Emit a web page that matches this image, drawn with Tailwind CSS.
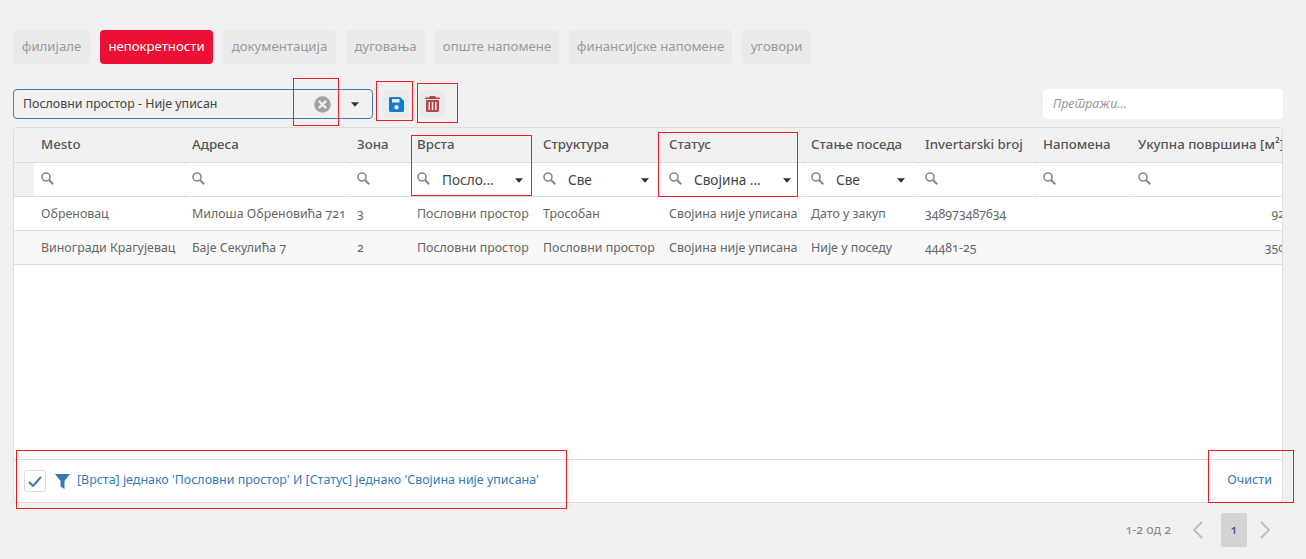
<!doctype html>
<html lang="sr">
<head>
<meta charset="utf-8">
<script src="https://cdn.jsdelivr.net/npm/@tailwindcss/browser@4"></script>
</head>
<body class="bg-[#f1f1f1] font-['Noto_Sans',sans-serif] text-[#555]">
<div class="relative h-[559px] w-[1306px] overflow-hidden px-[13px] pt-[30px]">

  <!-- tabs -->
  <div class="flex gap-[10px] text-[13.2px] text-[#999]">
    <div class="flex h-[34px] w-[77px] items-center justify-center rounded-[4px] bg-[#e9eaec]">филијале</div>
    <div class="flex h-[34px] w-[113px] items-center justify-center rounded-[4px] bg-[#eb1034] text-white">непокретности</div>
    <div class="flex h-[34px] w-[113px] items-center justify-center rounded-[4px] bg-[#e9eaec]">документација</div>
    <div class="flex h-[34px] w-[79px] items-center justify-center rounded-[4px] bg-[#e9eaec]">дуговања</div>
    <div class="flex h-[34px] w-[124px] items-center justify-center rounded-[4px] bg-[#e9eaec]">опште напомене</div>
    <div class="flex h-[34px] w-[163px] items-center justify-center rounded-[4px] bg-[#e9eaec]">финансијске напомене</div>
    <div class="flex h-[34px] w-[69px] items-center justify-center rounded-[4px] bg-[#e9eaec]">уговори</div>
  </div>

  <!-- toolbar -->
  <div class="mt-[25px] flex h-[30px] w-[1270px] items-center">
    <div class="flex h-[30px] w-[360px] items-center rounded-[4px] border border-[#3f7db8] pl-[9px] text-[12.4px] text-[#444]">
      <span class="flex-1 pt-px">Пословни простор - Није уписан</span>
      <svg class="mr-[20px]" width="17" height="17" viewBox="0 0 17 17"><circle cx="8.500" cy="8.500" r="8.300" fill="#a3a3a3"/><path d="M5.500 5.500l6 6M11.500 5.500l-6 6" stroke="#f1f1f1" stroke-width="2.400" stroke-linecap="round"/></svg>
      <svg class="mr-[13px]" width="8" height="5" viewBox="0 0 9 5"><path d="M0 0h9L4.500 5z" fill="#333"/></svg>
    </div>
    <div class="ml-[10px] flex h-[28px] w-[26px] items-center justify-center rounded-[4px] bg-[#e9eaec]">
      <svg width="15" height="15" viewBox="0 0 15 15"><path fill-rule="evenodd" d="M1.500 0H11l4 4v9.500a1.500 1.500 0 0 1-1.500 1.500h-12A1.500 1.500 0 0 1 0 13.500v-12A1.500 1.500 0 0 1 1.500 0zM3 2v3.500h7.500V2zM7.500 8a2.200 2.200 0 1 0 0 4.400 2.200 2.200 0 0 0 0-4.400z" fill="#1679c9"/></svg>
    </div>
    <div class="ml-[10px] flex h-[28px] w-[26px] items-center justify-center rounded-[4px] bg-[#e9eaec]">
      <svg width="15" height="16" viewBox="0 0 15 16"><path fill-rule="evenodd" d="M5 0h5l1 1.500h4V3H0V1.500h4zM1 4h13v10.500a1.500 1.500 0 0 1-1.500 1.500h-10A1.500 1.500 0 0 1 1 14.500zm2.500 2v8H5V6zm3.200 0v8h1.600V6zm3.300 0v8h1.500V6z" fill="#b0474a"/></svg>
    </div>
    <div class="ml-auto flex h-[30px] w-[240px] items-center rounded-[4px] bg-white pl-[10px] text-[12.4px] italic text-[#999]">Претражи...</div>
  </div>

  <!-- grid -->
  <div class="mt-[8px] h-[376px] w-[1270px] overflow-hidden rounded-[4px] border border-[#dcdcdc] bg-white text-[13px]">
    <div class="grid h-[35px] grid-cols-[20px_151px_165px_60px_126px_126px_142px_114px_118px_95px_181px] items-center border-b border-[#dcdcdc] bg-[#f1f1f1] text-[13.3px] font-medium whitespace-nowrap text-[#555]">
      <div></div>
      <div class="pl-[7px]">Mesto</div>
      <div class="pl-[7px]">Адреса</div>
      <div class="pl-[7px]">Зона</div>
      <div class="pl-[7px]">Врста</div>
      <div class="pl-[7px]">Структура</div>
      <div class="pl-[7px]">Статус</div>
      <div class="pl-[7px]">Стање поседа</div>
      <div class="pl-[7px]">Invertarski broj</div>
      <div class="pl-[7px]">Напомена</div>
      <div class="pl-[7px]">Укупна површина [м²]</div>
    </div>
    <div class="grid h-[34px] grid-cols-[20px_151px_165px_60px_126px_126px_142px_114px_118px_95px_181px] items-stretch border-b border-[#dcdcdc] bg-[#f1f1f1] text-[13.6px] text-[#444]">
      <div></div>
      <div class="flex items-center rounded-[3px] bg-white pb-[2px] pl-[7px]"><svg width="13" height="13" viewBox="0 0 13 13"><circle cx="5" cy="5" r="4" fill="none" stroke="#888" stroke-width="1.600"/><path d="M8 8l4.200 4.200" stroke="#888" stroke-width="2"/></svg></div>
      <div class="flex items-center rounded-[3px] bg-white pb-[2px] pl-[7px]"><svg width="13" height="13" viewBox="0 0 13 13"><circle cx="5" cy="5" r="4" fill="none" stroke="#888" stroke-width="1.600"/><path d="M8 8l4.200 4.200" stroke="#888" stroke-width="2"/></svg></div>
      <div class="flex items-center rounded-[3px] bg-white pb-[2px] pl-[7px]"><svg width="13" height="13" viewBox="0 0 13 13"><circle cx="5" cy="5" r="4" fill="none" stroke="#888" stroke-width="1.600"/><path d="M8 8l4.200 4.200" stroke="#888" stroke-width="2"/></svg></div>
      <div class="flex items-center rounded-[3px] bg-white pt-[2px] pr-[13px] pl-[7px]"><svg class="mb-[5px]" width="13" height="13" viewBox="0 0 13 13"><circle cx="5" cy="5" r="4" fill="none" stroke="#888" stroke-width="1.600"/><path d="M8 8l4.200 4.200" stroke="#888" stroke-width="2"/></svg><span class="ml-[12px] flex-1">Посло...</span><svg width="8" height="5" viewBox="0 0 9 5"><path d="M0 0h9L4.500 5z" fill="#333"/></svg></div>
      <div class="flex items-center rounded-[3px] bg-white pt-[2px] pr-[13px] pl-[7px]"><svg class="mb-[5px]" width="13" height="13" viewBox="0 0 13 13"><circle cx="5" cy="5" r="4" fill="none" stroke="#888" stroke-width="1.600"/><path d="M8 8l4.200 4.200" stroke="#888" stroke-width="2"/></svg><span class="ml-[12px] flex-1">Све</span><svg width="8" height="5" viewBox="0 0 9 5"><path d="M0 0h9L4.500 5z" fill="#333"/></svg></div>
      <div class="flex items-center rounded-[3px] bg-white pt-[2px] pr-[13px] pl-[7px]"><svg class="mb-[5px]" width="13" height="13" viewBox="0 0 13 13"><circle cx="5" cy="5" r="4" fill="none" stroke="#888" stroke-width="1.600"/><path d="M8 8l4.200 4.200" stroke="#888" stroke-width="2"/></svg><span class="ml-[12px] flex-1">Својина ...</span><svg width="8" height="5" viewBox="0 0 9 5"><path d="M0 0h9L4.500 5z" fill="#333"/></svg></div>
      <div class="flex items-center rounded-[3px] bg-white pt-[2px] pr-[13px] pl-[7px]"><svg class="mb-[5px]" width="13" height="13" viewBox="0 0 13 13"><circle cx="5" cy="5" r="4" fill="none" stroke="#888" stroke-width="1.600"/><path d="M8 8l4.200 4.200" stroke="#888" stroke-width="2"/></svg><span class="ml-[12px] flex-1">Све</span><svg width="8" height="5" viewBox="0 0 9 5"><path d="M0 0h9L4.500 5z" fill="#333"/></svg></div>
      <div class="flex items-center rounded-[3px] bg-white pb-[2px] pl-[7px]"><svg width="13" height="13" viewBox="0 0 13 13"><circle cx="5" cy="5" r="4" fill="none" stroke="#888" stroke-width="1.600"/><path d="M8 8l4.200 4.200" stroke="#888" stroke-width="2"/></svg></div>
      <div class="flex items-center rounded-[3px] bg-white pb-[2px] pl-[7px]"><svg width="13" height="13" viewBox="0 0 13 13"><circle cx="5" cy="5" r="4" fill="none" stroke="#888" stroke-width="1.600"/><path d="M8 8l4.200 4.200" stroke="#888" stroke-width="2"/></svg></div>
      <div class="flex items-center rounded-[3px] bg-white pb-[2px] pl-[7px]"><svg width="13" height="13" viewBox="0 0 13 13"><circle cx="5" cy="5" r="4" fill="none" stroke="#888" stroke-width="1.600"/><path d="M8 8l4.200 4.200" stroke="#888" stroke-width="2"/></svg></div>
    </div>
    <div class="grid h-[34px] grid-cols-[20px_151px_165px_60px_126px_126px_142px_114px_118px_95px_181px] items-center border-b border-[#dcdcdc] pt-[2px] text-[12.4px] whitespace-nowrap text-[#666] oldstyle-nums">
      <div></div>
      <div class="pl-[7px]">Обреновац</div>
      <div class="pl-[7px]">Милоша Обреновића 721</div>
      <div class="pl-[7px]">3</div>
      <div class="pl-[7px]">Пословни простор</div>
      <div class="pl-[7px]">Трособан</div>
      <div class="pl-[7px]">Својина није уписана</div>
      <div class="pl-[7px]">Дато у закуп</div>
      <div class="pl-[7px]">348973487634</div>
      <div></div>
      <div class="pr-[10px] text-right">92.00</div>
    </div>
    <div class="grid h-[34px] grid-cols-[20px_151px_165px_60px_126px_126px_142px_114px_118px_95px_181px] items-center border-b border-[#dcdcdc] bg-[#f8f8f8] pt-[2px] text-[12.4px] whitespace-nowrap text-[#666] oldstyle-nums">
      <div></div>
      <div class="pl-[7px]">Виногради Крагујевац</div>
      <div class="pl-[7px]">Баје Секулића 7</div>
      <div class="pl-[7px]">2</div>
      <div class="pl-[7px]">Пословни простор</div>
      <div class="pl-[7px]">Пословни простор</div>
      <div class="pl-[7px]">Својина није уписана</div>
      <div class="pl-[7px]">Није у поседу</div>
      <div class="pl-[7px]">44481-25</div>
      <div></div>
      <div class="pr-[10px] text-right">350.00</div>
    </div>
    <div class="mt-[194px] flex h-[43px] items-center border-t border-[#dcdcdc] pr-[10px] pl-[10px] text-[12.45px] text-[#337ab7]">
      <div class="flex h-[22px] w-[22px] items-center justify-center rounded-[2px] border border-[#ddd]">
        <svg width="14" height="11" viewBox="0 0 14 11"><path d="M1 6l4 4 8-9" fill="none" stroke="#3f76b0" stroke-width="2"/></svg>
      </div>
      <svg class="ml-[9px]" width="15" height="15" viewBox="0 0 15 15"><path d="M0 0h15L9.500 7v8l-4-2.500V7z" fill="#337ab7"/></svg>
      <span class="ml-[7px] flex-1 pb-[2px]">[Врста] једнако 'Пословни простор' И [Статус] једнако 'Својина није уписана'</span>
      <span class="pb-[2px] text-[12.6px]">Очисти</span>
    </div>
  </div>

  <!-- pagination -->
  <div class="mt-[10px] flex h-[34px] w-[1270px] items-center justify-end pr-[12px] text-[12.4px] text-[#888] oldstyle-nums">
    <span>1-2 од 2</span>
    <svg class="ml-[21px]" width="12" height="18" viewBox="0 0 12 18"><path d="M10 1L2 9l8 8" fill="none" stroke="#bdbdbd" stroke-width="2"/></svg>
    <div class="ml-[17px] flex h-[34px] w-[26px] items-center justify-center rounded-[2px] bg-[#d3d3d3] text-[#3a3a6a]">1</div>
    <svg class="ml-[12px]" width="12" height="18" viewBox="0 0 12 18"><path d="M2 1l8 8-8 8" fill="none" stroke="#bdbdbd" stroke-width="2"/></svg>
  </div>

  <!-- annotation rectangles -->
  <div class="absolute left-[293px] top-[78px] h-[48px] w-[46px] border border-[#ee1c25]"></div>
  <div class="absolute left-[376px] top-[81px] h-[40px] w-[37px] border border-[#ee1c25]"></div>
  <div class="absolute left-[417px] top-[83px] h-[40px] w-[41px] border border-[#ee1c25]"></div>
  <div class="absolute left-[411px] top-[135px] h-[61px] w-[121px] border border-[#ee1c25]"></div>
  <div class="absolute left-[658px] top-[132px] h-[65px] w-[140px] border border-[#ee1c25]"></div>
  <div class="absolute left-[16px] top-[450px] h-[59px] w-[551px] border border-[#ee1c25]"></div>
  <div class="absolute left-[1208px] top-[450px] h-[53px] w-[86px] border border-[#ee1c25]"></div>
</div>
</body>
</html>
